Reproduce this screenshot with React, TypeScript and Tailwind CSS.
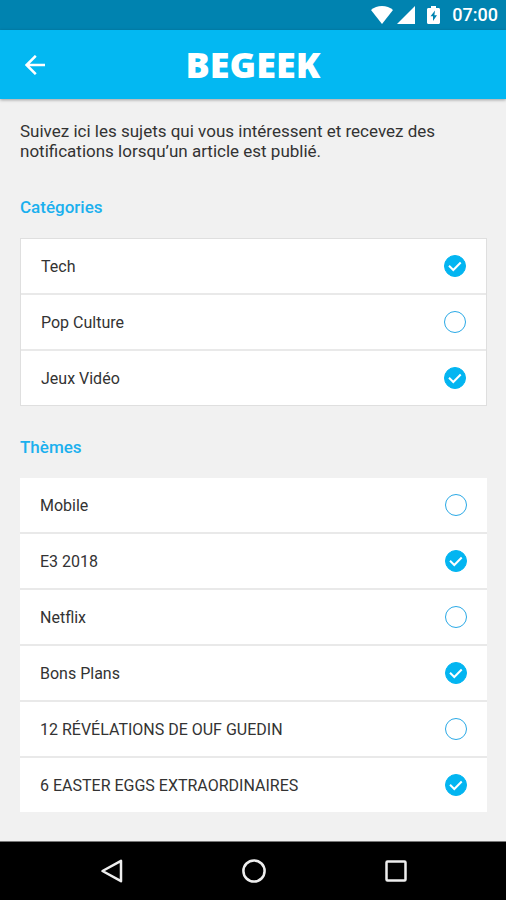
import { useState } from "react";

type Topic = { id: string; label: string };

const categories: Topic[] = [
  { id: "tech", label: "Tech" },
  { id: "pop-culture", label: "Pop Culture" },
  { id: "jeux-video", label: "Jeux Vidéo" },
];

const themes: Topic[] = [
  { id: "mobile", label: "Mobile" },
  { id: "e3-2018", label: "E3 2018" },
  { id: "netflix", label: "Netflix" },
  { id: "bons-plans", label: "Bons Plans" },
  { id: "revelations", label: "12 RÉVÉLATIONS DE OUF GUEDIN" },
  { id: "easter-eggs", label: "6 EASTER EGGS EXTRAORDINAIRES" },
];

function StatusBar() {
  return (
    <div className="flex h-[30px] items-center justify-end bg-[#0083b0] pr-2 text-white">
      <svg className="mr-1 h-[18px] w-[22px]" viewBox="0 0 22 18" fill="currentColor" aria-hidden="true">
        <path d="M0 4C3 1.200 6.800 0 11 0s8 1.200 11 4L11 18z" />
      </svg>
      <svg className="mr-3 h-[18px] w-[18px]" viewBox="0 0 18 18" fill="currentColor" aria-hidden="true">
        <path d="M18 0v18H0z" />
      </svg>
      <svg className="mr-3 h-[18px] w-[13px]" viewBox="0 0 13 18" aria-hidden="true">
        <path fill="currentColor" d="M4 0h5v2h2.500c.9 0 1.500.6 1.500 1.500v13c0 .9-.6 1.500-1.500 1.500h-10C.6 18 0 17.400 0 16.500v-13C0 2.600.6 2 1.500 2H4z" />
        <path fill="#0083b0" d="M8 4.500 3.500 10.300h2.500V15l4-5.800H7.400z" />
      </svg>
      <span className="text-lg leading-6 font-medium">07:00</span>
    </div>
  );
}

function TopicRow({ topic, checked, onToggle }: { topic: Topic; checked: boolean; onToggle: () => void }) {
  return (
    <li className="flex h-14 items-center justify-between border-b-2 border-[#e9e9e9] bg-white px-5 last:h-[54px] last:border-b-0">
      <label htmlFor={topic.id} className="flex-1 cursor-pointer pt-0.5 text-base leading-5">
        {topic.label}
      </label>
      <span className="relative flex h-[22px] w-[22px]">
        <input
          id={topic.id}
          type="checkbox"
          checked={checked}
          onChange={onToggle}
          className="h-[22px] w-[22px] cursor-pointer appearance-none rounded-full border border-[#2aa9e6] bg-white checked:border-[#03b5f1] checked:bg-[#03b5f1]"
        />
        {checked && (
          <svg className="pointer-events-none absolute inset-0 h-[22px] w-[22px]" viewBox="0 0 22 22" fill="none" stroke="white" strokeWidth="2" aria-hidden="true">
            <path d="M5 10.800 9.300 15 16.700 7.500" />
          </svg>
        )}
      </span>
    </li>
  );
}

export default function App() {
  const [followed, setFollowed] = useState<string[]>(["tech", "jeux-video", "e3-2018", "bons-plans", "easter-eggs"]);

  const toggle = (id: string) =>
    setFollowed((prev) => (prev.includes(id) ? prev.filter((t) => t !== id) : [...prev, id]));

  const renderRows = (topics: Topic[]) =>
    topics.map((topic) => (
      <TopicRow key={topic.id} topic={topic} checked={followed.includes(topic.id)} onToggle={() => toggle(topic.id)} />
    ));

  return (
    <div className="flex min-h-screen flex-col bg-[#f1f1f1] font-['Roboto',sans-serif] text-[#333]">
      <StatusBar />

      {/* App bar */}
      <header className="grid h-[69px] grid-cols-[1fr_auto_1fr] items-center bg-[#03b8f2] px-[23px] text-white shadow-[0_1px_3px_rgba(0,0,0,0.35)]">
        <button type="button" aria-label="Retour" className="flex w-6 cursor-pointer justify-center">
          <svg className="h-5 w-5" viewBox="0 0 20 20" fill="none" stroke="currentColor" strokeWidth="2.500" aria-hidden="true">
            <path d="M20 10H1.800M10.800 .8 1.600 10l9.200 9.200" />
          </svg>
        </button>
        <h1 className="font-['Noto_Sans',sans-serif] text-[36px] leading-10 font-black">BEGEEK</h1>
      </header>

      <main className="flex-1 px-5 pt-[22px] pb-7">
        <p className="text-[17px] leading-5">
          Suivez ici les sujets qui vous intéressent et recevez des notifications lorsqu’un article est publié.
        </p>

        <section>
          <h2 className="mt-9 mb-[21px] text-[17px] leading-5 font-medium text-[#1bb0ee]">Catégories</h2>
          <ul className="mr-[-1px] border border-[#dfdfdf]">{renderRows(categories)}</ul>
        </section>

        <section>
          <h2 className="mt-[31px] mb-[21px] text-[17px] leading-5 font-medium text-[#1bb0ee]">Thèmes</h2>
          <ul className="mr-[-1px]">{renderRows(themes)}</ul>
        </section>
      </main>

      {/* System navigation */}
      <nav className="flex h-[59px] items-center justify-between border-t border-[#777] bg-black pr-24 pl-[98px] text-[#eee]">
        <button type="button" aria-label="Précédent" className="cursor-pointer">
          <svg className="h-7 w-7" viewBox="0 0 28 28" fill="none" stroke="currentColor" strokeWidth="2.500" strokeLinejoin="round" aria-hidden="true">
            <path d="M4.500 14 23 3.800v20.400z" />
          </svg>
        </button>
        <button type="button" aria-label="Accueil" className="cursor-pointer">
          <svg className="h-7 w-7" viewBox="0 0 28 28" fill="none" stroke="currentColor" strokeWidth="2.500" aria-hidden="true">
            <circle cx="14" cy="14" r="10.600" />
          </svg>
        </button>
        <button type="button" aria-label="Applications récentes" className="cursor-pointer">
          <svg className="h-7 w-7" viewBox="0 0 28 28" fill="none" stroke="currentColor" strokeWidth="2.500" aria-hidden="true">
            <rect x="4.500" y="4.500" width="19" height="19" rx="1" />
          </svg>
        </button>
      </nav>
    </div>
  );
}
